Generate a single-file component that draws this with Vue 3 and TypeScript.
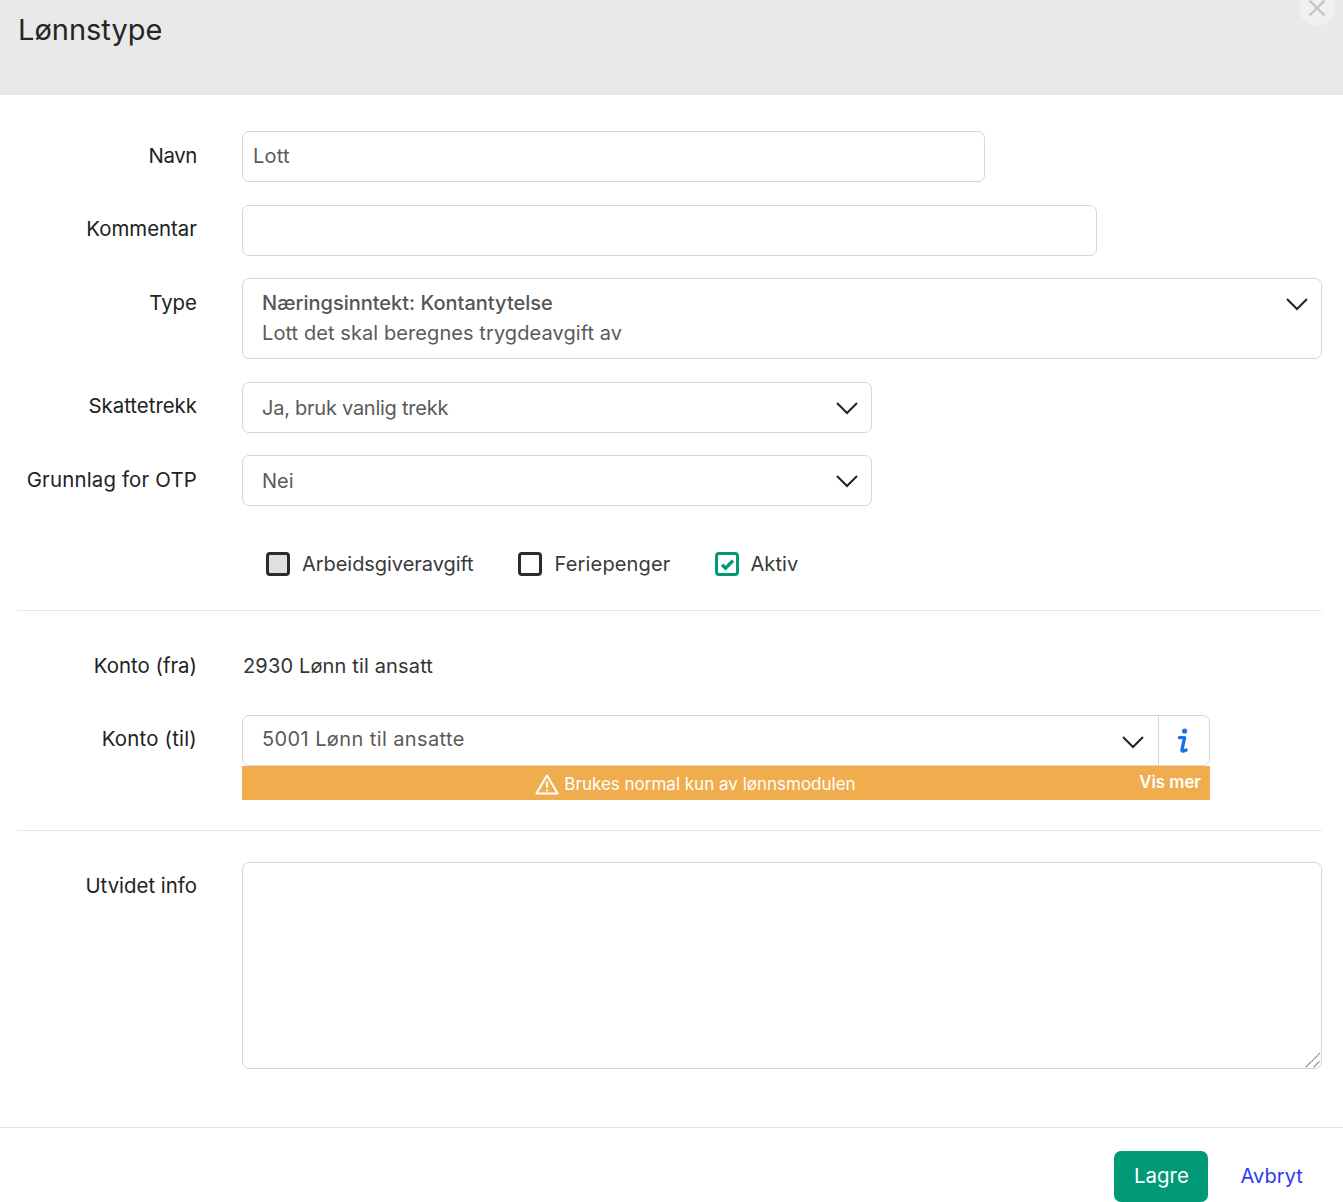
<script setup lang="ts">
const checks = [
  { label: 'Arbeidsgiveravgift', state: 'disabled' },
  { label: 'Feriepenger', state: 'off' },
  { label: 'Aktiv', state: 'on' },
]
</script>

<template>
  <div class="dialog">
    <header class="head">
      <h1 class="title">Lønnstype</h1>
      <button class="close" aria-label="Lukk">
        <svg width="18" height="18" viewBox="0 0 18 18"><path d="M1.5 1.5l15 15M16.5 1.5l-15 15" stroke="#c4c4c4" stroke-width="2.2" fill="none" /></svg>
      </button>
    </header>

    <main class="body">
      <div class="row r1">
        <label class="lab">Navn</label>
        <div class="ctl w743 box lift">Lott</div>
      </div>
      <div class="row r2">
        <label class="lab">Kommentar</label>
        <div class="ctl w855 box"></div>
      </div>
      <div class="row r3">
        <label class="lab">Type</label>
        <div class="ctl w1080 box select tall">
          <div class="two">
            <div class="strong">Næringsinntekt: Kontantytelse</div>
            <div class="sub">Lott det skal beregnes trygdeavgift av</div>
          </div>
          <svg class="chev up" width="24" height="14" viewBox="0 0 24 14"><path d="M2 2l10 10L22 2" stroke="#222" stroke-width="2" fill="none" /></svg>
        </div>
      </div>
      <div class="row r4">
        <label class="lab">Skattetrekk</label>
        <div class="ctl w630 box select">
          <span class="tight">Ja, bruk vanlig trekk</span>
          <svg class="chev" width="24" height="14" viewBox="0 0 24 14"><path d="M2 2l10 10L22 2" stroke="#222" stroke-width="2" fill="none" /></svg>
        </div>
      </div>
      <div class="row r5">
        <label class="lab">Grunnlag for OTP</label>
        <div class="ctl w630 box select">
          <span>Nei</span>
          <svg class="chev" width="24" height="14" viewBox="0 0 24 14"><path d="M2 2l10 10L22 2" stroke="#222" stroke-width="2" fill="none" /></svg>
        </div>
      </div>

      <div class="checks">
        <div v-for="c in checks" :key="c.label" class="check" :class="'c-' + c.state">
          <span class="cb" :class="c.state">
            <svg v-if="c.state === 'on'" width="15" height="13" viewBox="0 0 15 13"><path d="M2 6.8l3.6 3.4L13 2.6" stroke="#009a78" stroke-width="3.4" fill="none" /></svg>
          </span>
          <span>{{ c.label }}</span>
        </div>
      </div>

      <hr class="rule first" />

      <div class="row fra">
        <label class="lab">Konto (fra)</label>
        <div class="plain">2930 Lønn til ansatt</div>
      </div>

      <div class="row til">
        <label class="lab">Konto (til)</label>
        <div class="w968">
          <div class="group">
            <div class="group-main">
              <span class="wide">5001 Lønn til ansatte</span>
              <svg class="chev low" width="24" height="14" viewBox="0 0 24 14"><path d="M2 2l10 10L22 2" stroke="#222" stroke-width="2" fill="none" /></svg>
            </div>
            <div class="info">
              <svg width="12" height="26" viewBox="0 0 12 26"><circle cx="7.6" cy="3" r="2.6" fill="#1a73e8" /><path d="M2.4 9.6h5.2L5 21.5q-.3 1.6 1 1.6l3-1" stroke="#1a73e8" stroke-width="3.4" fill="none" stroke-linecap="round" stroke-linejoin="round" /></svg>
            </div>
          </div>
          <div class="warn">
            <span class="warn-text">
              <svg width="24" height="21" viewBox="0 0 24 21"><path d="M12 1.6L1.4 19.6h21.2z" stroke="#fff" stroke-width="2" fill="none" stroke-linejoin="round" /><path d="M12 7.5v6.3M12 15.4v1.9" stroke="#fff" stroke-width="2" fill="none" /></svg>
              Brukes normal kun av lønnsmodulen
            </span>
            <span class="more">Vis mer</span>
          </div>
        </div>
      </div>

      <hr class="rule second" />

      <div class="row info-row">
        <label class="lab">Utvidet info</label>
        <div class="area-wrap">
          <textarea class="area"></textarea>
          <svg class="grip" width="16" height="16" viewBox="0 0 16 16"><path d="M1 15L15 1M9 15l6-6" stroke="#666" stroke-width="1.2" stroke-dasharray="1.4 .7" fill="none" /></svg>
        </div>
      </div>
    </main>

    <footer class="foot">
      <button class="save">Lagre</button>
      <a class="cancel">Avbryt</a>
    </footer>
  </div>
</template>

<style>
html, body { margin: 0; background: #fff; overflow: hidden; }
</style>

<style scoped>
.dialog {
  width: 1343px;
  height: 1202px;
  overflow: hidden;
  font-family: Inter, "Liberation Sans", sans-serif;
  font-size: 20px;
  color: #2b2b2b;
  background: #fff;
}
.head {
  height: 95px;
  background: #e9e9e9;
  position: relative;
  box-sizing: border-box;
  padding: 12px 18px;
}
.title {
  margin: 0;
  font-size: 29px;
  font-weight: 400;
  line-height: 36px;
  color: #252525;
}
.close {
  position: absolute;
  right: 8px;
  top: -10px;
  width: 36px;
  height: 36px;
  border: 0;
  padding: 0;
  border-radius: 50%;
  background: #f0f0f0;
  display: flex;
  align-items: center;
  justify-content: center;
}
.body { padding: 36px 21px 0 17px; }
.row { display: flex; align-items: flex-start; }
.lab {
  width: 180px;
  flex: none;
  margin-right: 45px;
  text-align: right;
  font-size: 20.4px;
  line-height: 24px;
  padding-top: 13px;
  color: #222;
}
.r1 .lab { letter-spacing: -.4px; }
.r5 .lab { letter-spacing: .18px; }
.til .lab { letter-spacing: .2px; }
.r2 .lab, .r4 .lab { padding-top: 12px; }
.box, .group, .area {
  border: 1px solid #d6d6d6;
  border-radius: 7px;
  box-sizing: border-box;
  background: #fff;
}
.ctl {
  height: 51px;
  padding: 0 10px;
  display: flex;
  align-items: center;
  color: #5a5a5a;
}
.lift { padding-bottom: 2px; letter-spacing: .2px; }
.w743 { width: 743px; }
.w855 { width: 855px; }
.w1080 { width: 1080px; }
.w630 { width: 630px; }
.w968 { width: 968px; }
.r2 { margin-top: 23px; }
.r3 { margin-top: 22px; }
.r4 { margin-top: 23px; }
.r5 { margin-top: 22px; }
.select { padding: 0 12px 0 19px; justify-content: space-between; }
.tall { height: 81px; align-items: flex-start; }
.two { line-height: 30px; padding-top: 9px; }
.strong { color: #555; font-weight: 500; }
.sub { letter-spacing: .08px; }
.tight { letter-spacing: -.25px; }
.wide { letter-spacing: .4px; margin-bottom: 3px; }
.chev { flex: none; }
.chev.up { margin-top: 18px; }
.chev.low { margin-top: 3px; }
.checks {
  display: flex;
  height: 24px;
  margin: 46px 0 0 249px;
  gap: 45px;
}
.check { display: flex; align-items: center; gap: 12px; color: #3a3a3a; line-height: 24px; }
.c-disabled { letter-spacing: -.05px; }
.c-off { letter-spacing: .15px; gap: 13px; margin-left: -1px; }
.c-on { letter-spacing: .1px; gap: 11px; }
.cb {
  width: 24px;
  height: 24px;
  box-sizing: border-box;
  border: 3px solid #2b2b2b;
  border-radius: 4px;
  display: flex;
  align-items: center;
  justify-content: center;
}
.cb.disabled { background: #e0e0e0; }
.cb.on { border-color: #009a78; }
.rule { border: 0; border-top: 1px solid #e8e8e8; margin: 0; width: 1305px; }
.rule.first { margin-top: 34px; }
.rule.second { margin-top: 30px; }
.fra { margin-top: 43px; }
.fra .lab { padding-top: 0; }
.plain { line-height: 24px; margin-left: 1px; letter-spacing: .15px; color: #333; }
.til { margin-top: 37px; }
.til .lab, .info-row .lab { padding-top: 12px; }
.group { display: flex; height: 51px; }
.group-main {
  flex: 1;
  display: flex;
  align-items: center;
  justify-content: space-between;
  padding: 0 13px 0 19px;
  color: #5a5a5a;
}
.info {
  width: 51px;
  flex: none;
  border-left: 1px solid #d6d6d6;
  display: flex;
  align-items: center;
  justify-content: center;
  padding-right: 3px;
  box-sizing: border-box;
}
.warn {
  position: relative;
  height: 34px;
  background: #f0ad4e;
  color: #fff;
  font-size: 17px;
  display: flex;
  align-items: center;
  justify-content: center;
  padding-right: 61px;
  box-sizing: border-box;
}
.warn-text { display: flex; align-items: center; gap: 5px; margin-top: 2px; }
.more {
  position: absolute;
  right: 9px;
  top: 6px;
  font-size: 16.8px;
  font-weight: 600;
}
.info-row { margin-top: 31px; }
.area-wrap { position: relative; width: 1080px; height: 207px; }
.area {
  display: block;
  width: 100%;
  height: 100%;
  resize: none;
  outline: none;
  font: inherit;
}
.grip { position: absolute; right: 1px; bottom: 1px; pointer-events: none; }
.foot {
  margin-top: 58px;
  border-top: 1px solid #e4e4e4;
  height: 75px;
  box-sizing: border-box;
  padding: 23px 40px 0 0;
  display: flex;
  justify-content: flex-end;
  align-items: flex-start;
  gap: 32px;
}
.save {
  width: 94px;
  height: 51px;
  border: 0;
  border-radius: 7px;
  background: #009a78;
  color: #fff;
  font: inherit;
  font-size: 20.4px;
  padding: 0 0 2px;
}
.cancel { line-height: 51px; color: #2a3cf0; letter-spacing: .1px; }
</style>
